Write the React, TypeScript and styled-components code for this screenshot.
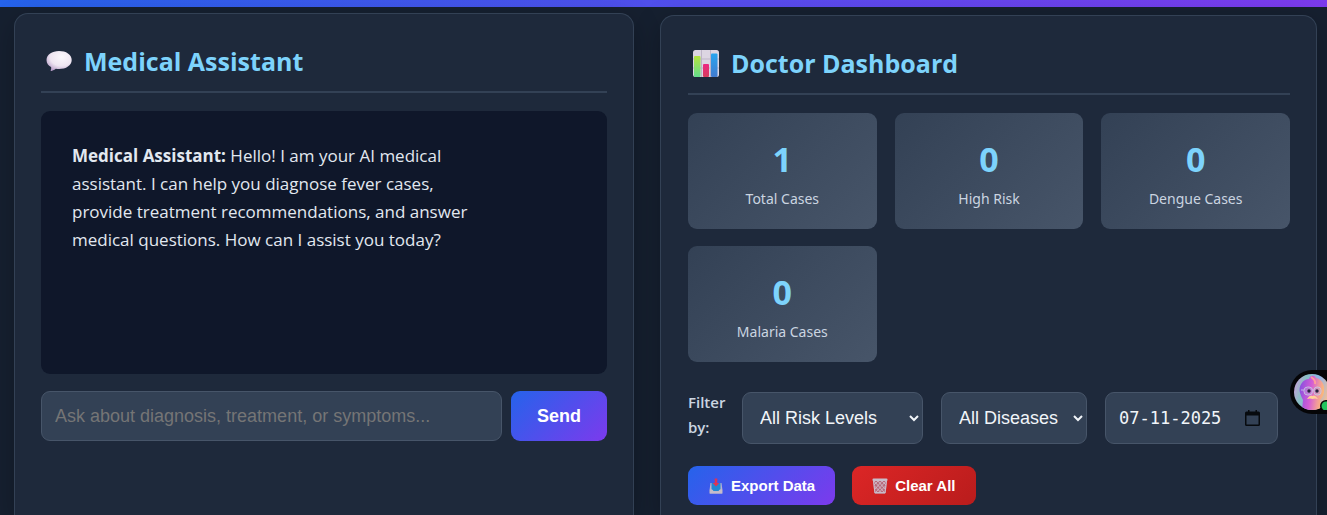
import React from "react";
import styled, { createGlobalStyle, css } from "styled-components";

const GlobalStyle = createGlobalStyle`
  *, *::before, *::after { box-sizing: border-box; }
  body {
    margin: 0;
    background: #162030;
    color: #e2e8f0;
    font-family: "Segoe UI", "Open Sans", sans-serif;
  }
`;

const Page = styled.div`
  display: flex;
  flex-direction: column;
  min-height: 100vh;
  overflow: hidden;
`;

const TopBar = styled.div`
  flex: none;
  height: 7px;
  background: linear-gradient(90deg, #2563eb, #7c3aed);
`;

const Columns = styled.main`
  flex: 1;
  display: grid;
  grid-template-columns: minmax(0, 620fr) minmax(0, 657fr);
  gap: 26px;
  padding: 0 10px 0 14px;
`;

const Panel = styled.section<{ $raised?: boolean }>`
  margin-top: ${(p) => (p.$raised ? 6 : 8)}px;
  padding: 26px 26px 10px ${(p) => (p.$raised ? 26 : 27)}px;
  background: #1e293b;
  border: 1px solid #334155;
  border-bottom: 0;
  border-radius: 14px 14px 0 0;
  box-shadow: 0 8px 28px rgba(0, 0, 0, 0.24);
`;

const PanelHeader = styled.header`
  display: flex;
  align-items: center;
  gap: 11px;
  height: 53px;
  padding: 0 4px 9px;
  margin-bottom: 18px;
  border-bottom: 2px solid #334155;

  svg { flex: none; }
`;

const PanelTitle = styled.h2`
  margin: 0;
  color: #7dd3fc;
  font-size: 25px;
  line-height: 36px;
  font-weight: 700;
`;

const ChatLog = styled.div`
  height: 263px;
  padding: 31px;
  background: #0f172a;
  border-radius: 9px;
`;

const Message = styled.p`
  margin: 0;
  max-width: 400px;
  font-size: 17px;
  line-height: 28px;
`;

const ChatForm = styled.form`
  display: flex;
  gap: 9px;
  margin-top: 17px;
`;

const fieldStyle = css`
  background: #334155;
  border: 1px solid #475569;
  border-radius: 9px;
  color: #f1f5f9;
  font-family: Arial, "Liberation Sans", sans-serif;
  font-size: 18px;
`;

const ChatInput = styled.input`
  ${fieldStyle}
  flex: 1;
  min-width: 0;
  height: 50px;
  padding: 0 13px;

  &::placeholder { color: #757575; }
`;

const Button = styled.button<{ $tone?: "danger"; $small?: boolean }>`
  display: flex;
  align-items: center;
  justify-content: center;
  gap: 7px;
  height: ${(p) => (p.$small ? 39 : 50)}px;
  padding: 0 ${(p) => (p.$small ? 20 : 26)}px;
  border: 0;
  border-radius: 9px;
  background: ${(p) =>
    p.$tone === "danger"
      ? "linear-gradient(135deg, #dc2626, #b91c1c)"
      : "linear-gradient(135deg, #2563eb, #7c3aed)"};
  color: #fff;
  font-family: Arial, "Liberation Sans", sans-serif;
  font-size: ${(p) => (p.$small ? 15 : 18)}px;
  font-weight: 700;
  white-space: nowrap;
  cursor: pointer;
`;

const Stats = styled.div`
  display: grid;
  grid-template-columns: repeat(3, minmax(0, 1fr));
  gap: 17px 18px;
`;

const StatCard = styled.div`
  display: flex;
  flex-direction: column;
  align-items: center;
  height: 116px;
  padding-top: 21px;
  border-radius: 9px;
  background: linear-gradient(135deg, #334155, #475569);
`;

const StatValue = styled.strong`
  color: #7dd3fc;
  font-size: 34px;
  line-height: 50px;
  font-weight: 700;
`;

const StatLabel = styled.span`
  color: #cbd5e1;
  font-family: "Segoe UI", "Noto Sans", sans-serif;
  font-size: 14px;
  line-height: 30px;
`;

const Filters = styled.div`
  display: flex;
  align-items: center;
  gap: 18px;
  margin-top: 28px;
`;

const FilterLabel = styled.label`
  width: 36px;
  flex: none;
  padding-bottom: 6px;
  color: #cbd5e1;
  font-size: 15px;
  line-height: 25px;
  font-weight: 600;
`;

const Select = styled.select<{ $width: number }>`
  ${fieldStyle}
  width: ${(p) => p.$width}px;
  height: 52px;
  padding: 0 0 0 13px;
`;

const DateField = styled.div`
  ${fieldStyle}
  display: flex;
  align-items: center;
  width: 173px;
  height: 52px;
  padding: 0 17px 0 13px;
`;

const DateInput = styled.input`
  flex: 1;
  min-width: 0;
  padding: 0;
  border: 0;
  outline: 0;
  background: none;
  color: #f1f5f9;
  font-family: Consolas, "DejaVu Sans Mono", monospace;
  font-size: 17px;
`;

const CalendarButton = styled.button`
  display: flex;
  padding: 0;
  border: 0;
  background: none;
  cursor: pointer;
`;

const Actions = styled.div`
  display: flex;
  gap: 17px;
  margin-top: 20px;
`;

const AssistantBubble = styled.button`
  position: fixed;
  top: 370px;
  right: 0;
  width: 37px;
  height: 44px;
  padding: 4px 0 4px 4px;
  border: 0;
  border-radius: 22px 0 0 22px;
  background: #050507;
  overflow: hidden;
  cursor: pointer;

  svg { display: block; }
`;

const SpeechIcon = () => (
  <svg width="28" height="28" viewBox="0 0 28 28" aria-hidden="true">
    <defs>
      <radialGradient id="speech" cx="0.6" cy="0.3" r="0.75">
        <stop offset="0" stopColor="#fbf8fc" />
        <stop offset="0.6" stopColor="#eee5f1" />
        <stop offset="1" stopColor="#b69bc7" />
      </radialGradient>
    </defs>
    <path
      d="M14 4C7 4 1.500 7.600 1.500 13c0 3.300 1.800 5.600 4.500 7.100.5.900.1 2.200-.3 3.200-.2.600.1.900.7.700 1.800-.4 3.300-1.200 4.400-2.200 1 .2 2.100.2 3.200.2 7 0 12.700-3.400 12.700-9S21 4 14 4z"
      fill="url(#speech)"
    />
  </svg>
);

const ChartIcon = () => (
  <svg width="28" height="28" viewBox="0 0 28 28" aria-hidden="true">
    <defs>
      <linearGradient id="green" x2="0" y2="1">
        <stop stopColor="#b5e33f" />
        <stop offset="1" stopColor="#63dc8b" />
      </linearGradient>
      <linearGradient id="pink" x2="0" y2="1">
        <stop stopColor="#ed2783" />
        <stop offset="1" stopColor="#d63c5c" />
      </linearGradient>
      <linearGradient id="blue" x2="0" y2="1">
        <stop stopColor="#28a5ef" />
        <stop offset="1" stopColor="#427bd0" />
      </linearGradient>
    </defs>
    <rect x="1" y="1" width="26" height="27" rx="2.500" fill="#dcd5e2" />
    <path d="M9.500 1v27M18.500 1v27M1 10h26M1 19h26" stroke="#bdb4c7" />
    <rect x="2" y="7" width="6.500" height="21" rx="1" fill="url(#green)" />
    <rect x="11" y="15" width="6" height="13" rx="1" fill="url(#pink)" />
    <rect x="19" y="4.500" width="6.500" height="23.500" rx="1" fill="url(#blue)" />
  </svg>
);

const ExportIcon = () => (
  <svg width="16" height="16" viewBox="0 0 16 16" aria-hidden="true">
    <path d="M2.500 5h11l.8 6v4.500H1.700V11z" fill="#b9b3cf" />
    <path d="M3.500 5h9v6.500l-2 1.500h-5l-2-1.500z" fill="#2088d4" />
    <path d="M1.700 11.500h2.500l1.500 2h4.600l1.500-2h2.500v4H1.700z" fill="#c5bcca" />
    <path d="M6.700 0.500h2.600V5h2L8 8.500 4.700 5h2z" fill="#dc3455" />
  </svg>
);

const TrashIcon = () => (
  <svg width="16" height="16" viewBox="0 0 16 16" aria-hidden="true">
    <path d="M1 2h14l-1.500 13.500h-11z" fill="#b66b7b" />
    <path
      d="M2 3l10 11M6 3l7 8M10 3l4 4M2.500 8l6 6M14 3L4 14M10 3l-7 8M6 3L2 7M13.500 8l-6 6"
      stroke="#d4c3d0"
      strokeWidth="0.800"
    />
    <path d="M1.500 2.500l1.400 12h10.200l1.400-12" fill="none" stroke="#cbbac8" strokeWidth="1.200" />
    <rect x="0.500" y="0.500" width="15" height="2.500" rx="1" fill="#c8bdca" />
    <path d="M3 14h10v1.500H3z" fill="#c8bdca" />
  </svg>
);

const CalendarIcon = () => (
  <svg width="15" height="16" viewBox="0 0 15 16" aria-hidden="true">
    <path
      d="M3 0h1.500v1.500h6V0H12v1.500h1.500Q15 1.500 15 3v11.500Q15 16 13.500 16h-12Q0 16 0 14.500V3q0-1.500 1.500-1.500H3zM1.500 5.500v9h12v-9z"
      fill="#070a0e"
    />
  </svg>
);

const AvatarIcon = () => (
  <svg width="36" height="36" viewBox="0 0 36 36" aria-hidden="true">
    <defs>
      <linearGradient id="backdrop" x1="0" y1="0.300" x2="1" y2="0.600">
        <stop stopColor="#c6a0d8" />
        <stop offset="0.250" stopColor="#89bfc4" />
        <stop offset="0.600" stopColor="#91b4e8" />
        <stop offset="1" stopColor="#ffc08a" />
      </linearGradient>
      <linearGradient id="figure" x1="0" y1="0.400" x2="1" y2="0.600">
        <stop stopColor="#8b50df" />
        <stop offset="0.450" stopColor="#d45dd5" />
        <stop offset="0.750" stopColor="#f19a9b" />
        <stop offset="1" stopColor="#ffc170" />
      </linearGradient>
      <clipPath id="circle">
        <circle cx="18" cy="18" r="18" />
      </clipPath>
    </defs>
    <g clipPath="url(#circle)">
      <rect width="36" height="36" fill="url(#backdrop)" />
      <path
        d="M6 19C4 12 9 5 15 5c1-4 6-4 7-1 6 1 9 7 8 14-.4 4-3 7-4 9l3 9H8l1-10c-1-2-2-4-3-7z"
        fill="url(#figure)"
      />
      <path d="M17 3c3 2 5 4 4 7" stroke="#ff9e9b" strokeWidth="2" fill="none" />
      <path d="M13 25q3-5 5.500-3 2.500-2 5.500 3-3-1-5.500 0-2.500-1-5.500 0z" fill="#ffd398" />
      <g fill="#b8a2d8" fillOpacity="0.450" stroke="#c9cfe6" strokeWidth="0.800">
        <rect x="10" y="13" width="8.500" height="8" rx="3.500" />
        <rect x="20" y="13" width="7" height="8" rx="3" />
        <path d="M18.500 16H20M7 16h3" />
      </g>
      <circle cx="15" cy="17" r="1.700" fill="#26233f" />
      <circle cx="23" cy="17" r="1.700" fill="#26233f" />
    </g>
    <circle cx="32" cy="32" r="6" fill="#050507" />
    <circle cx="32" cy="32" r="4.500" fill="#22c55e" />
  </svg>
);

const stats = [
  { label: "Total Cases", value: 1 },
  { label: "High Risk", value: 0 },
  { label: "Dengue Cases", value: 0 },
  { label: "Malaria Cases", value: 0 },
];

export default function App() {
  return (
    <Page>
      <GlobalStyle />
      <TopBar />
      <Columns>
        <Panel $raised>
          <PanelHeader>
            <SpeechIcon />
            <PanelTitle>Medical Assistant</PanelTitle>
          </PanelHeader>
          <ChatLog>
            <Message>
              <strong>Medical Assistant:</strong> Hello! I am your AI medical assistant. I can help
              you diagnose fever cases, provide treatment recommendations, and answer medical
              questions. How can I assist you today?
            </Message>
          </ChatLog>
          <ChatForm onSubmit={(e) => e.preventDefault()}>
            <ChatInput
              type="text"
              aria-label="Your question"
              placeholder="Ask about diagnosis, treatment, or symptoms..."
            />
            <Button type="submit">Send</Button>
          </ChatForm>
        </Panel>

        <Panel>
          <PanelHeader>
            <ChartIcon />
            <PanelTitle>Doctor Dashboard</PanelTitle>
          </PanelHeader>
          <Stats>
            {stats.map((s) => (
              <StatCard key={s.label}>
                <StatValue>{s.value}</StatValue>
                <StatLabel>{s.label}</StatLabel>
              </StatCard>
            ))}
          </Stats>
          <Filters>
            <FilterLabel htmlFor="risk">Filter by:</FilterLabel>
            <Select id="risk" $width={181}>
              <option>All Risk Levels</option>
            </Select>
            <Select aria-label="Disease" $width={146}>
              <option>All Diseases</option>
            </Select>
            <DateField>
              <DateInput type="text" aria-label="Date" defaultValue="07-11-2025" />
              <CalendarButton type="button" aria-label="Choose date">
                <CalendarIcon />
              </CalendarButton>
            </DateField>
          </Filters>
          <Actions>
            <Button type="button" $small>
              <ExportIcon />
              Export Data
            </Button>
            <Button type="button" $small $tone="danger">
              <TrashIcon />
              Clear All
            </Button>
          </Actions>
        </Panel>
      </Columns>
      <AssistantBubble type="button" aria-label="Open assistant">
        <AvatarIcon />
      </AssistantBubble>
    </Page>
  );
}
